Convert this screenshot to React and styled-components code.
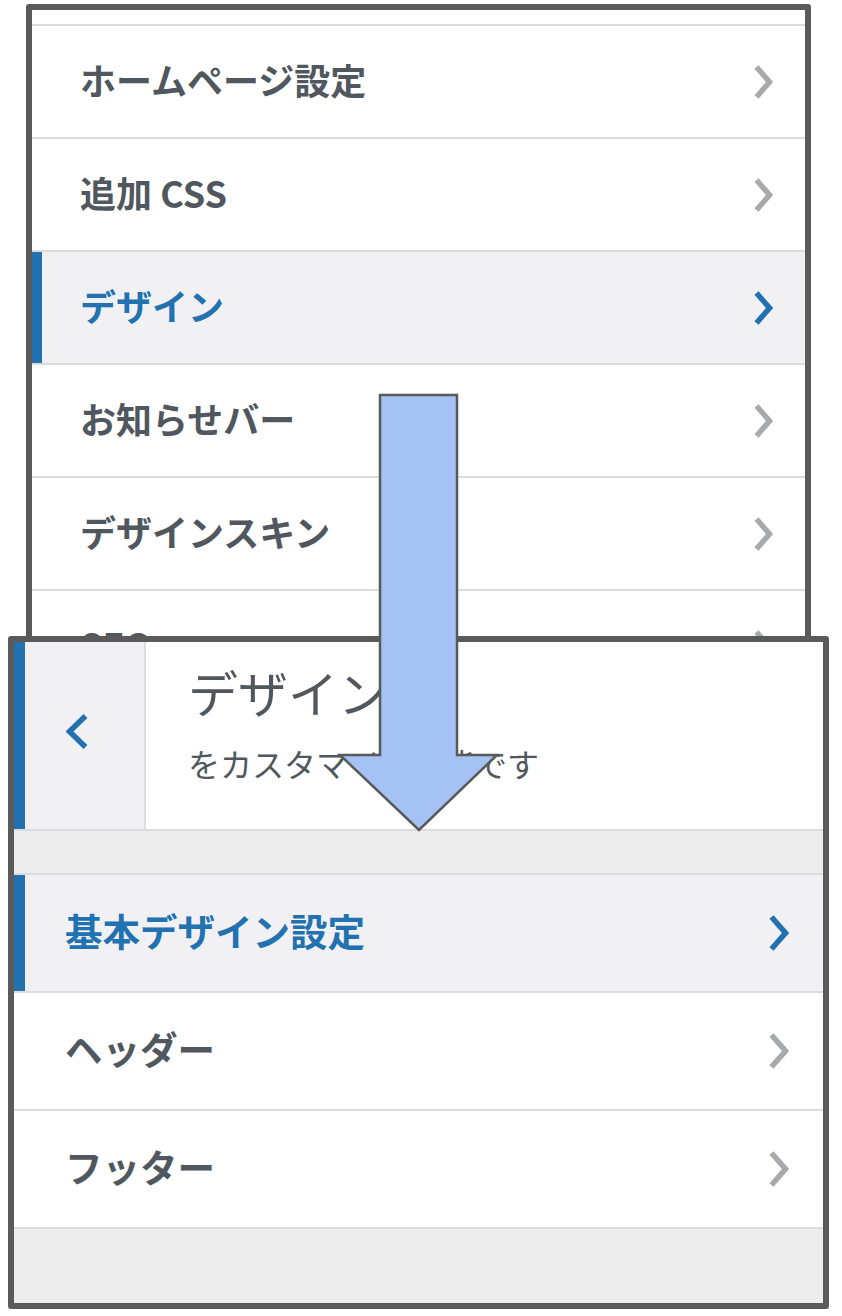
import React from 'react';
import styled, { createGlobalStyle } from 'styled-components';

const GlobalStyle = createGlobalStyle`
  html, body {
    margin: 0;
    padding: 0;
    background: #ffffff;
  }
  body {
    font-family: "Noto Sans CJK JP", "Noto Sans", sans-serif;
    color: #50575e;
  }
`;

const Stage = styled.div`
  position: relative;
  width: 842px;
  height: 1316px;
  padding-top: 4px;
  box-sizing: border-box;
  overflow: hidden;
`;

const Window = styled.div`
  position: relative;
  z-index: ${p => p.$layer};
  box-sizing: border-box;
  width: ${p => p.$width}px;
  height: ${p => p.$height}px;
  margin-left: ${p => p.$left}px;
  margin-top: ${p => p.$top}px;
  border: 6px solid #5a5a5a;
  border-radius: 3px;
  background: #ffffff;
  overflow: hidden;
  display: flex;
  flex-direction: column;
`;

const Sliver = styled.div`
  height: 14px;
  flex: none;
  border-bottom: 2px solid #dcdcde;
`;

const MenuRow = styled.div`
  flex: none;
  height: ${p => p.$height}px;
  display: flex;
  align-items: center;
  justify-content: space-between;
  padding: 0 ${p => p.$padRight}px 0 ${p => p.$padLeft}px;
  border-bottom: 2px solid #dcdcde;
  background: ${p => (p.$active ? '#f1f1f3' : '#ffffff')};
  box-shadow: ${p => (p.$active ? `inset ${p.$bar}px 0 0 #2271b1` : 'none')};
  color: ${p => (p.$active ? '#2271b1' : '#50575e')};
`;

const RowLabel = styled.span`
  font-size: ${p => p.$size}px;
  font-weight: 700;
  line-height: 1;
  padding-bottom: 6px;
  white-space: nowrap;
`;

const PanelHead = styled.div`
  flex: none;
  height: 187px;
  display: flex;
  border-bottom: 2px solid #dcdcde;
`;

const BackButton = styled.div`
  flex: none;
  width: 132px;
  box-sizing: border-box;
  display: flex;
  align-items: center;
  padding-left: 52px;
  padding-bottom: 8px;
  background: #f1f1f3;
  box-shadow: inset 11px 0 0 #2271b1;
  border-right: 2px solid #dcdcde;
`;

const HeadText = styled.div`
  display: flex;
  flex-direction: column;
  padding: 19px 0 0 42px;
`;

const HeadTitle = styled.div`
  font-size: 50px;
  font-weight: 400;
  line-height: 60px;
  color: #50575e;
  white-space: nowrap;
`;

const HeadNote = styled.div`
  margin-top: 21px;
  font-size: 32px;
  font-weight: 400;
  line-height: 42px;
  color: #50575e;
  white-space: nowrap;
`;

const GreyBand = styled.div`
  flex: ${p => (p.$fill ? '1' : 'none')};
  height: ${p => (p.$fill ? 'auto' : `${p.$height}px`)};
  background: #ededed;
  border-bottom: ${p => (p.$fill ? 'none' : '2px solid #dcdcde')};
`;

const ArrowOverlay = styled.svg`
  position: absolute;
  left: 330px;
  top: 390px;
  z-index: 5;
  overflow: visible;
`;

const Chevron = ({ w, h, color, left }) => (
  <svg width={w} height={h} viewBox={`0 0 ${w} ${h}`} style={{ display: 'block' }}>
    <polyline
      points={
        left
          ? `${w - 3.5},3 ${3.5},${h / 2} ${w - 3.5},${h - 3}`
          : `3.5,3 ${w - 3.5},${h / 2} 3.5,${h - 3}`
      }
      fill="none"
      stroke={color}
      strokeWidth="5.5"
      strokeLinejoin="miter"
    />
  </svg>
);

const topItems = [
  { label: 'ホームページ設定' },
  { label: '追加 CSS' },
  { label: 'デザイン', active: true },
  { label: 'お知らせバー' },
  { label: 'デザインスキン' },
  { label: 'SEO' },
];

const subItems = [
  { label: '基本デザイン設定', active: true },
  { label: 'ヘッダー' },
  { label: 'フッター' },
];

export default function App() {
  return (
    <>
      <GlobalStyle />
      <Stage>
        <Window $layer={1} $width={785} $height={660} $left={26} $top={0}>
          <Sliver />
          {topItems.map(item => (
            <MenuRow
              key={item.label}
              $height={111}
              $padLeft={48}
              $padRight={32}
              $bar={10}
              $active={item.active}
            >
              <RowLabel $size={36}>{item.label}</RowLabel>
              <Chevron w={20} h={36} color={item.active ? '#2271b1' : '#a7aaad'} />
            </MenuRow>
          ))}
        </Window>

        <Window $layer={2} $width={821} $height={673} $left={8} $top={-28}>
          <PanelHead>
            <BackButton>
              <Chevron w={23} h={37} color="#2271b1" left />
            </BackButton>
            <HeadText>
              <HeadTitle>デザイン</HeadTitle>
              <HeadNote>をカスタマイズ可能です</HeadNote>
            </HeadText>
          </PanelHead>
          <GreyBand $height={42} />
          {subItems.map(item => (
            <MenuRow
              key={item.label}
              $height={116}
              $padLeft={51}
              $padRight={34}
              $bar={11}
              $active={item.active}
            >
              <RowLabel $size={37.5}>{item.label}</RowLabel>
              <Chevron w={21} h={38} color={item.active ? '#2271b1' : '#a7aaad'} />
            </MenuRow>
          ))}
          <GreyBand $fill />
        </Window>

        <ArrowOverlay width="180" height="450" viewBox="0 0 180 450">
          <polygon
            points="50,5 127,5 127,365 167,365 89,440 10,365 50,365"
            fill="#a4c2f4"
            stroke="#595959"
            strokeWidth="2.5"
            strokeLinejoin="miter"
          />
        </ArrowOverlay>
      </Stage>
    </>
  );
}
